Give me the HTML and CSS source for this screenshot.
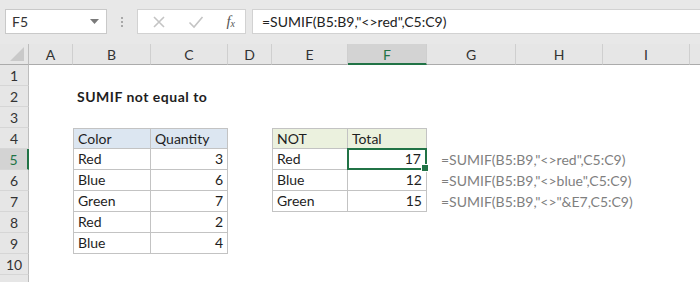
FILE: index.html
```html
<!DOCTYPE html>
<html lang="en">
<head>
  <meta charset="UTF-8">
  <title>SUMIF not equal to</title>
  <link rel="stylesheet" href="styles.css">
</head>
<body>
  <div class="toolbar">
    <div class="namebox">
      <span>F5</span>
      <svg class="arrow" width="9" height="5" viewBox="0 0 9 5"><path d="M0 0h9L4.5 5z" fill="#7a7a7a"/></svg>
    </div>
    <div class="grip">
      <i></i><i></i><i></i>
    </div>
    <div class="fxbox">
      <svg width="14" height="14" viewBox="0 0 14 14"><path d="M2 2l10 10M12 2L2 12" stroke="#c4c4c4" stroke-width="1.6" fill="none"/></svg>
      <svg width="16" height="14" viewBox="0 0 16 14"><path d="M1.5 7.5l4.5 4.5L14.5 2" stroke="#c4c4c4" stroke-width="1.6" fill="none"/></svg>
      <span class="fx">f<sub>x</sub></span>
    </div>
    <div class="formula">=SUMIF(B5:B9,"&lt;&gt;red",C5:C9)</div>
  </div>

  <div class="sheet">
    <div class="corner"><svg width="14" height="14" viewBox="0 0 14 14"><path d="M14 0v14H0z" fill="#c9c9c9"/></svg></div>
    <div class="colhead">A</div>
    <div class="colhead">B</div>
    <div class="colhead">C</div>
    <div class="colhead">D</div>
    <div class="colhead">E</div>
    <div class="colhead active">F</div>
    <div class="colhead">G</div>
    <div class="colhead">H</div>
    <div class="colhead">I</div>
    <div class="colhead last"></div>

    <!-- row 1 -->
    <div class="rowhead">1</div>
    <div class="cell"></div><div class="cell"></div><div class="cell"></div><div class="cell"></div><div class="cell"></div><div class="cell"></div><div class="cell"></div><div class="cell"></div><div class="cell"></div><div class="cell"></div>

    <!-- row 2 -->
    <div class="rowhead">2</div>
    <div class="cell"></div><div class="cell title">SUMIF not equal to</div><div class="cell"></div><div class="cell"></div><div class="cell"></div><div class="cell"></div><div class="cell"></div><div class="cell"></div><div class="cell"></div><div class="cell"></div>

    <!-- row 3 -->
    <div class="rowhead">3</div>
    <div class="cell"></div><div class="cell"></div><div class="cell"></div><div class="cell"></div><div class="cell"></div><div class="cell"></div><div class="cell"></div><div class="cell"></div><div class="cell"></div><div class="cell"></div>

    <!-- row 4 -->
    <div class="rowhead">4</div>
    <div class="cell"></div>
    <div class="cell t top left blue">Color</div>
    <div class="cell t top blue">Quantity</div>
    <div class="cell"></div>
    <div class="cell t top left green">NOT</div>
    <div class="cell t top green">Total</div>
    <div class="cell"></div><div class="cell"></div><div class="cell"></div><div class="cell"></div>

    <!-- row 5 -->
    <div class="rowhead active">5</div>
    <div class="cell"></div>
    <div class="cell t left">Red</div>
    <div class="cell t num">3</div>
    <div class="cell"></div>
    <div class="cell t left">Red</div>
    <div class="cell t num selected">17</div>
    <div class="cell note">=SUMIF(B5:B9,"&lt;&gt;red",C5:C9)</div>
    <div class="cell"></div><div class="cell"></div><div class="cell"></div>

    <!-- row 6 -->
    <div class="rowhead">6</div>
    <div class="cell"></div>
    <div class="cell t left">Blue</div>
    <div class="cell t num">6</div>
    <div class="cell"></div>
    <div class="cell t left">Blue</div>
    <div class="cell t num">12</div>
    <div class="cell note">=SUMIF(B5:B9,"&lt;&gt;blue",C5:C9)</div>
    <div class="cell"></div><div class="cell"></div><div class="cell"></div>

    <!-- row 7 -->
    <div class="rowhead">7</div>
    <div class="cell"></div>
    <div class="cell t left">Green</div>
    <div class="cell t num">7</div>
    <div class="cell"></div>
    <div class="cell t left">Green</div>
    <div class="cell t num">15</div>
    <div class="cell note">=SUMIF(B5:B9,"&lt;&gt;"&amp;E7,C5:C9)</div>
    <div class="cell"></div><div class="cell"></div><div class="cell"></div>

    <!-- row 8 -->
    <div class="rowhead">8</div>
    <div class="cell"></div>
    <div class="cell t left">Red</div>
    <div class="cell t num">2</div>
    <div class="cell"></div><div class="cell"></div><div class="cell"></div><div class="cell"></div><div class="cell"></div><div class="cell"></div><div class="cell"></div>

    <!-- row 9 -->
    <div class="rowhead">9</div>
    <div class="cell"></div>
    <div class="cell t left">Blue</div>
    <div class="cell t num">4</div>
    <div class="cell"></div><div class="cell"></div><div class="cell"></div><div class="cell"></div><div class="cell"></div><div class="cell"></div><div class="cell"></div>

    <!-- row 10 -->
    <div class="rowhead">10</div>
    <div class="cell"></div><div class="cell"></div><div class="cell"></div><div class="cell"></div><div class="cell"></div><div class="cell"></div><div class="cell"></div><div class="cell"></div><div class="cell"></div><div class="cell"></div>

    <!-- row 11, only a sliver shows -->
    <div class="rowhead"></div>
    <div class="cell"></div><div class="cell"></div><div class="cell"></div><div class="cell"></div><div class="cell"></div><div class="cell"></div><div class="cell"></div><div class="cell"></div><div class="cell"></div><div class="cell"></div>
  </div>
</body>
</html>
```

FILE: styles.css
```css
* {
  box-sizing: border-box;
}
body {
  margin: 0;
  width: 700px;
  height: 282px;
  overflow: hidden;
  font-family: Lato, "Liberation Sans", sans-serif;
  font-size: 14px;
  color: #1e1e1e;
  background: #fff;
}

/* formula bar */
.toolbar {
  height: 44px;
  background: #e8e8e8;
  display: flex;
  align-items: flex-start;
  padding: 9px 0 0 5px;
}
.namebox {
  width: 102px;
  height: 25px;
  background: #fff;
  border: 1px solid #c9c9c9;
  display: flex;
  align-items: center;
  justify-content: space-between;
  padding: 0 7px 0 6px;
  color: #333;
}
.grip {
  width: 30px;
  height: 25px;
  display: flex;
  flex-direction: column;
  align-items: center;
  justify-content: center;
  gap: 2px;
}
.grip i {
  width: 2px;
  height: 2px;
  background: #a8a8a8;
}
.fxbox {
  width: 109px;
  height: 25px;
  background: #fff;
  border: 1px solid #d2d2d2;
  display: flex;
  align-items: center;
  padding: 0 10px 0 14px;
  gap: 22px;
}
.fx {
  font-family: "Liberation Serif", serif;
  font-style: italic;
  font-size: 15px;
  color: #555;
  margin-left: auto;
}
.fx sub {
  font-size: 10px;
  vertical-align: -1px;
}
.formula {
  flex: 1;
  height: 25px;
  margin-left: 6px;
  background: #fff;
  border: 1px solid #d2d2d2;
  border-right: none;
  padding: 3px 0 0 9px;
  color: #222;
  white-space: nowrap;
}

/* grid */
.sheet {
  display: grid;
  grid-template-columns: 29px 44px 78px 77px 44px 76px 79px 89px 87px 87px 1fr;
  grid-template-rows: 21px;
  grid-auto-rows: 21px;
}
.corner {
  background: #e6e6e6;
  border-right: 1px solid #bdbdbd;
  border-bottom: 1px solid #ababab;
  display: flex;
  align-items: flex-end;
  justify-content: flex-end;
  padding: 0 4px 3px 0;
}
.colhead {
  background: #e6e6e6;
  border-right: 1px solid #cfcfcf;
  border-bottom: 1px solid #ababab;
  text-align: center;
  line-height: 21px;
  color: #333;
}
.colhead.active {
  background: #d3d3d3;
  color: #217346;
  border-bottom: 2px solid #217346;
}
.colhead.last {
  border-right: none;
}
.rowhead {
  background: #e6e6e6;
  border-right: 1px solid #bdbdbd;
  border-bottom: 1px solid #d6d6d6;
  text-align: center;
  line-height: 22px;
  color: #333;
}
.rowhead.active {
  background: #d3d3d3;
  color: #217346;
  border-right: 2px solid #217346;
}
.cell {
  padding: 0 4px;
  line-height: 21px;
  white-space: nowrap;
}
.title {
  font-weight: bold;
  letter-spacing: 0.5px;
}
.t {
  border-right: 1px solid #c3c3c3;
  border-bottom: 1px solid #c3c3c3;
  line-height: 20px;
}
.t.top {
  border-top: 1px solid #c3c3c3;
  line-height: 20px;
}
.t.left {
  border-left: 1px solid #c3c3c3;
}
.blue {
  background: #dce6f1;
}
.green {
  background: #ebf1de;
}
.num {
  text-align: right;
}
.note {
  color: #7f7f7f;
  padding-left: 14px;
}
.selected {
  position: relative;
  border: 2px solid #217346;
  margin: -1px 0 0 -1px;
  line-height: 18px;
}
.selected::after {
  content: "";
  position: absolute;
  right: -4px;
  bottom: -4px;
  width: 6px;
  height: 6px;
  background: #217346;
  border: 1px solid #fff;
}
```
